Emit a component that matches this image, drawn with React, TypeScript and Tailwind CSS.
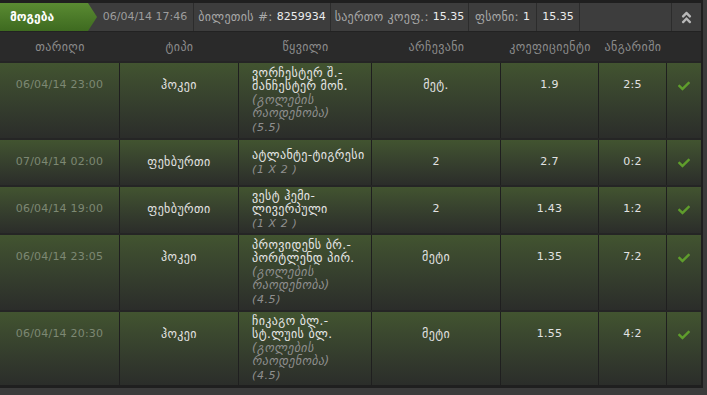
import React from "react";
import { FaCheck, FaAngleDoubleUp } from "react-icons/fa";

type Row = {
  date: string;
  type: string;
  name: string[];
  sub: string[];
  pick: string;
  coef: string;
  score: string;
  h: string;
};

const rows: Row[] = [
  {
    date: "06/04/14 23:00",
    type: "ჰოკეი",
    name: ["ვორჩესტერ შ.-", "მანჩესტერ მონ."],
    sub: ["(გოლების", "რაოდენობა)", "(5.5)"],
    pick: "მეტ.",
    coef: "1.9",
    score: "2:5",
    h: "h-[75px]",
  },
  {
    date: "07/04/14 02:00",
    type: "ფეხბურთი",
    name: ["ატლანტე-ტიგრესი"],
    sub: ["(1 X 2 )"],
    pick: "2",
    coef: "2.7",
    score: "0:2",
    h: "h-[45px]",
  },
  {
    date: "06/04/14 19:00",
    type: "ფეხბურთი",
    name: ["ვესტ ჰემი-", "ლივერპული"],
    sub: ["(1 X 2 )"],
    pick: "2",
    coef: "1.43",
    score: "1:2",
    h: "h-[46px]",
  },
  {
    date: "06/04/14 23:05",
    type: "ჰოკეი",
    name: ["პროვიდენს ბრ.-", "პორტლენდ პირ."],
    sub: ["(გოლების", "რაოდენობა)", "(4.5)"],
    pick: "მეტი",
    coef: "1.35",
    score: "7:2",
    h: "h-[75px]",
  },
  {
    date: "06/04/14 20:30",
    type: "ჰოკეი",
    name: ["ჩიკაგო ბლ.-", "სტ.ლუის ბლ."],
    sub: ["(გოლების", "რაოდენობა)", "(4.5)"],
    pick: "მეტი",
    coef: "1.55",
    score: "4:2",
    h: "h-[73px]",
  },
];

const headers = ["თარიღი", "ტიპი", "წყვილი", "არჩევანი", "კოეფიციენტი", "ანგარიში", ""];

const grid = "grid grid-cols-[120px_119px_133px_129px_98px_68px_34px]";

const isGeo = (s: string) => /[\u10A0-\u10FF]/.test(s);

export default function App() {
  return (
    <div className="w-[707px] h-[395px] bg-[#3b3b3b] font-['DejaVu_Sans',sans-serif] text-[11px] overflow-hidden">
      <div className="w-[703px] bg-[#242424] border-t-[3px] border-r-2 border-b-[3px] border-[#1f1f1f]">
        {/* top bar */}
        <div className="flex h-[29px] bg-[#3d3d3d] border-b border-[#222]">
          <div className="w-[97px] h-full bg-gradient-to-b from-[#5a8b32] to-[#3e6a20] [clip-path:polygon(0_0,88px_0,97px_50%,88px_100%,0_100%)] flex items-center pl-[10px] font-bold text-[12px] text-white">
            მოგება
          </div>
          <div className="w-[97px] border-r border-[#2c2c2c] flex items-center justify-center text-[#9c9c9c]">
            06/04/14 17:46
          </div>
          <div className="w-[137px] border-r border-[#2c2c2c] flex items-center justify-center whitespace-nowrap">
            <span className="text-[#a8a8a8] text-[12px] tracking-[0.3px]">ბილეთის #:</span>
            <span className="text-[#ececec] ml-[4px]">8259934</span>
          </div>
          <div className="w-[138px] border-r border-[#2c2c2c] flex items-center justify-center whitespace-nowrap">
            <span className="text-[#a8a8a8] text-[12px] tracking-[0.3px]">საერთო კოეფ.:</span>
            <span className="text-[#ececec] ml-[4px]">15.35</span>
          </div>
          <div className="w-[68px] border-r border-[#2c2c2c] flex items-center justify-center whitespace-nowrap">
            <span className="text-[#a8a8a8] text-[12px] tracking-[0.3px]">ფსონი:</span>
            <span className="text-[#ececec] ml-[4px]">1</span>
          </div>
          <div className="w-[43px] border-r border-[#2c2c2c] flex items-center justify-center text-[#ececec]">
            15.35
          </div>
          <div className="w-[92px] border-r border-[#2c2c2c]" />
          <div className="w-[29px] flex items-center justify-center text-[#b8b8b8]">
            <FaAngleDoubleUp size={15} />
          </div>
        </div>

        {/* header */}
        <div className={`${grid} h-[29px] bg-[#2a2a2a] text-[#8c8c8c] text-[12px] tracking-[0.4px]`}>
          {headers.map((h, i) => (
            <div key={i} className="flex items-center justify-center">
              {h}
            </div>
          ))}
        </div>

        {/* rows */}
        <div className="flex flex-col gap-[2px] pt-[2px] bg-[#252525]">
          {rows.map((r, i) => (
            <div
              key={i}
              className={`${grid} ${r.h} bg-gradient-to-b from-[#425430] to-[#2b2d2a]`}
            >
              <div className="border-r border-[#1f1f1f] text-center pt-[15px] leading-[14px] text-[#7d8873] tracking-[0.2px]">
                {r.date}
              </div>
              <div className="border-r border-[#1f1f1f] text-center pt-[15px] leading-[14px] text-[12px] tracking-[0.4px] text-[#e2e2e2]">
                {r.type}
              </div>
              <div className="border-r border-[#1f1f1f] pl-[13px] flex flex-col justify-center leading-[13.5px] whitespace-nowrap">
                {r.name.map((n, j) => (
                  <div key={j} className="text-[#e6e6e6] text-[12px] tracking-[0.4px]">
                    {n}
                  </div>
                ))}
                {r.sub.map((s, j) => (
                  <div
                    key={j}
                    className={
                      isGeo(s)
                        ? "italic text-[#8f8f8f] text-[12px] tracking-[0.4px]"
                        : "italic text-[#8f8f8f] text-[11px] tracking-[0.6px]"
                    }
                  >
                    {s}
                  </div>
                ))}
              </div>
              <div
                className={
                  isGeo(r.pick)
                    ? "border-r border-[#1f1f1f] text-center pt-[15px] leading-[14px] text-[12px] tracking-[0.4px] text-[#e2e2e2]"
                    : "border-r border-[#1f1f1f] text-center pt-[15px] leading-[14px] text-[#e2e2e2]"
                }
              >
                {r.pick}
              </div>
              <div className="border-r border-[#1f1f1f] text-center pt-[15px] leading-[14px] text-[#e2e2e2] tracking-[0.3px]">
                {r.coef}
              </div>
              <div className="border-r border-[#1f1f1f] text-center pt-[15px] leading-[14px] text-[#e2e2e2] tracking-[0.3px]">
                {r.score}
              </div>
              <div className="flex justify-center pt-[17px] text-[#5f9d2c]">
                <FaCheck size={12} />
              </div>
            </div>
          ))}
        </div>
      </div>
    </div>
  );
}
